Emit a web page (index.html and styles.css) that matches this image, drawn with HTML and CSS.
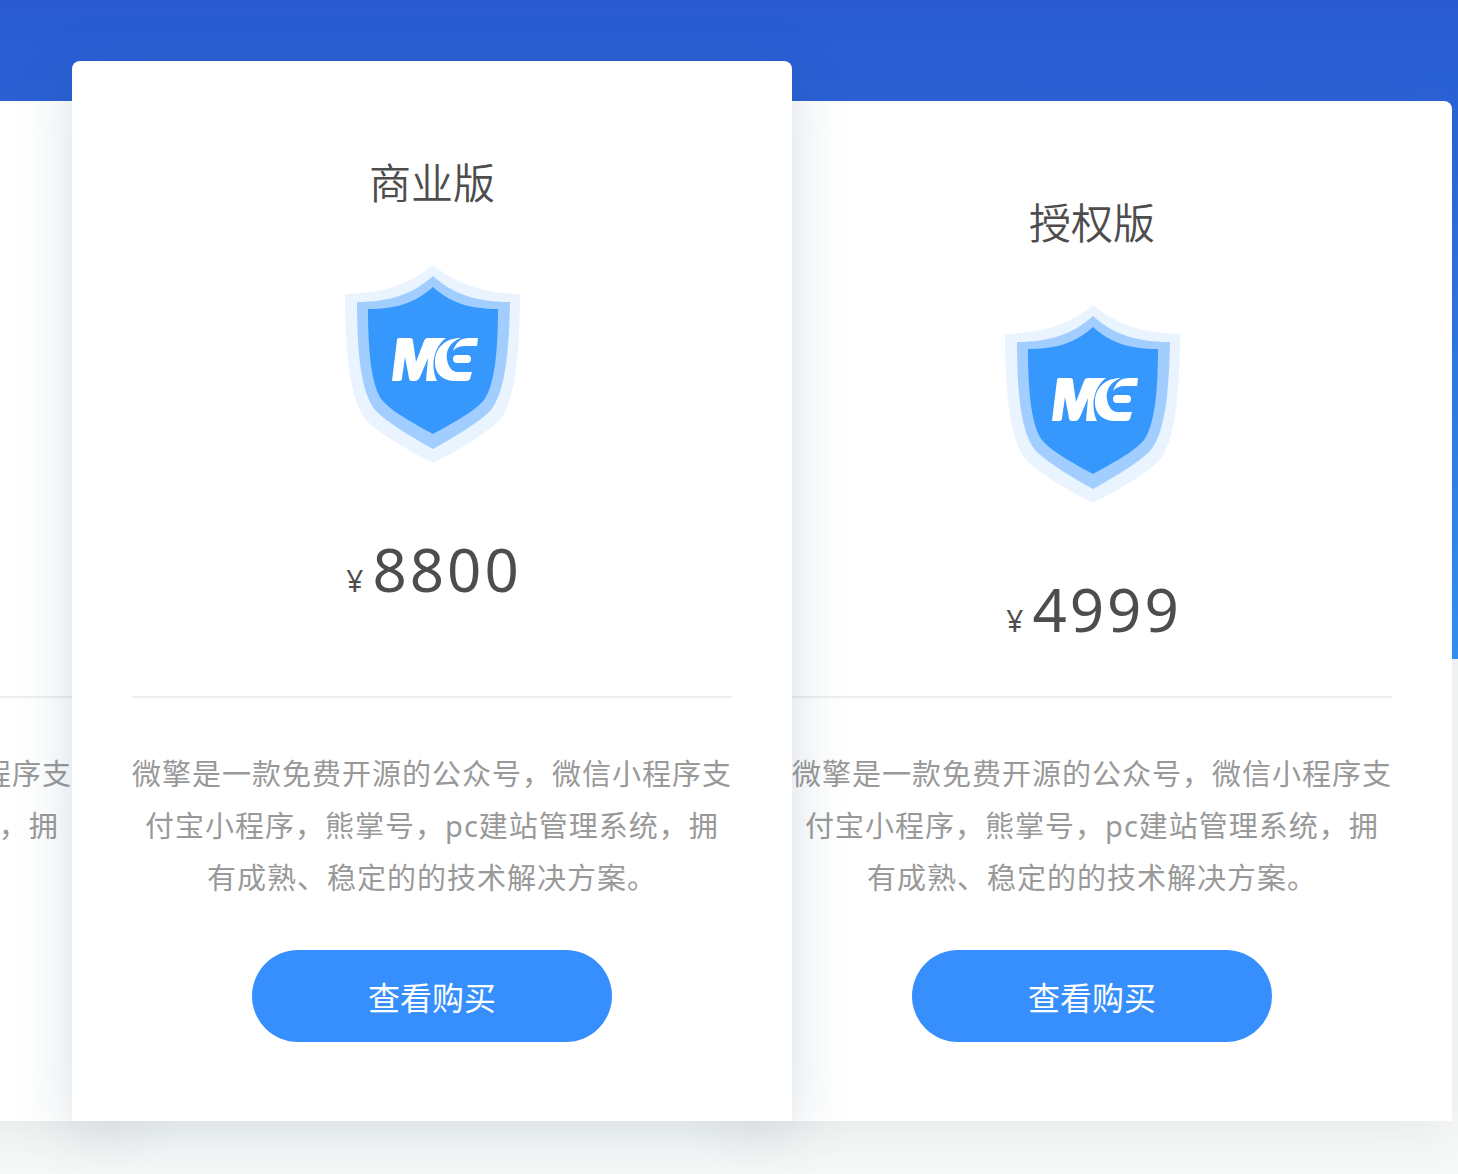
FILE: index.html
```html
<!DOCTYPE html>
<html lang="zh-CN">
<head>
  <title>微擎 - 版本价格</title>
  <meta charset="UTF-8" />
  <meta name="viewport" content="width=device-width, initial-scale=1.0" />
  <link rel="stylesheet" href="styles.css">
</head>
<body>

  <!-- Shield shared by every card -->
  <svg class="symbols" aria-hidden="true">
    <symbol id="shield" viewBox="-1 0 176 198">
      <path fill="#eaf4ff" d="M88 0C64 19 40 28 0 29C0 75 3 138 23 157C35 168 60 184 88 198C116 184 141 168 153 157C172 138 175 75 175 29C136 28 112 19 88 0Z"/>
      <path fill="#a1ceff" d="M88 11C68 29 45 37 12 37C12 82 15 128 31 146C43 158 65 171 88 184C111 171 133 158 145 146C161 128 164 82 165 37C131 37 108 29 88 11Z"/>
      <path fill="#3698fd" d="M88 22C70 38 52 44 23 44C23 84 26 120 37 135C47 147 70 159 88 169C106 159 129 147 139 135C150 120 153 84 153 44C124 44 106 38 88 22Z"/>
      <g fill="#fff">
        <path d="M54 73H65Q68 73 68 76L71 97L79 76Q80 73 83 73H101C89 82 85 100 92 116H81L83 93L75 112Q73 116 70 116H67Q64 116 64 113L60 92L57 113Q57 116 54 116H47L52 75Q52 73 54 73Z"/>
        <path d="M116 73C102 78 99 90 104 101Q107 107 113 107H127L125 114Q124 116 121 116H108C95 115 89 106 90 95C91 82 101 73 116 73Z"/>
        <path d="M108 86Q112 73 124 73H133L132 81H120Q112 81 108 86Z"/>
        <rect x="108" y="90" width="18" height="8" rx="4"/>
      </g>
    </symbol>
  </svg>

  <div class="versions">
    <div class="card">
      <h2>免费版</h2>
      <svg class="shield" aria-hidden="true"><use href="#shield"/></svg>
      <p class="price"><span>¥</span>0</p>
      <p class="desc">微擎是一款免费开源的公众号，微信小程序支付宝小程序，熊掌号，pc建站管理系统，拥有成熟、稳定的的技术解决方案。</p>
      <button type="button">查看购买</button>
    </div>

    <div class="card active">
      <h2>商业版</h2>
      <svg class="shield" aria-hidden="true"><use href="#shield"/></svg>
      <p class="price"><span>¥</span>8800</p>
      <p class="desc">微擎是一款免费开源的公众号，微信小程序支付宝小程序，熊掌号，pc建站管理系统，拥有成熟、稳定的的技术解决方案。</p>
      <button type="button">查看购买</button>
    </div>

    <div class="card">
      <h2>授权版</h2>
      <svg class="shield" aria-hidden="true"><use href="#shield"/></svg>
      <p class="price"><span>¥</span>4999</p>
      <p class="desc">微擎是一款免费开源的公众号，微信小程序支付宝小程序，熊掌号，pc建站管理系统，拥有成熟、稳定的的技术解决方案。</p>
      <button type="button">查看购买</button>
    </div>
  </div>

</body>
</html>
```

FILE: styles.css
```css
* {
  box-sizing: border-box;
}

body {
  margin: 0;
  background: #f8faf9 linear-gradient(#295ad2, #3392f8) no-repeat top / 100% 659px;
  font-family: "Noto Sans", "Noto Sans CJK SC", sans-serif;
  color: #4d4d4d;
}

.symbols {
  display: none;
}

/* Row of cards, the last one sits against the right edge */
.versions {
  display: flex;
  justify-content: flex-end;
  align-items: flex-end;
  padding: 61px 6px 53px 0;
  overflow: hidden;
}

.card {
  display: flex;
  flex-direction: column;
  align-items: center;
  flex: none;
  width: 720px;
  padding: 92px 60px 79px;
  border-radius: 8px 8px 0 0;
  background: #fff;
  box-shadow: 0 10px 60px rgba(60, 70, 90, 0.1);
  text-align: center;
}

.card + .card {
  margin-left: -60px;
}

/* Highlighted card is taller and overlaps its neighbours */
.card.active {
  position: relative;
  z-index: 1;
  box-shadow: 0 10px 60px rgba(40, 80, 110, 0.18);
}

.card h2 {
  margin: 0;
  font-size: 42px;
  font-weight: 350;
  line-height: 60px;
}

.shield {
  width: 176px;
  height: 198px;
  margin-top: 52px;
}

.price {
  width: 100%;
  margin: 66px 0 0;
  padding: 0 0 35px 4px;
  border-bottom: 2px solid #eee;
  font-size: 60px;
  line-height: 80px;
  letter-spacing: 3px;
}

.card.active .price {
  padding-bottom: 75px;
}

.price span {
  margin-right: 6px;
  font-size: 30px;
}

.desc {
  margin: 50px 0 0;
  font-size: 29px;
  line-height: 52px;
  letter-spacing: 1px;
  color: #999;
}

.card button {
  width: 360px;
  height: 92px;
  margin-top: 46px;
  border: 0;
  border-radius: 46px;
  background: #368ffc;
  color: #fff;
  font-family: inherit;
  font-size: 32px;
  cursor: pointer;
}
```
